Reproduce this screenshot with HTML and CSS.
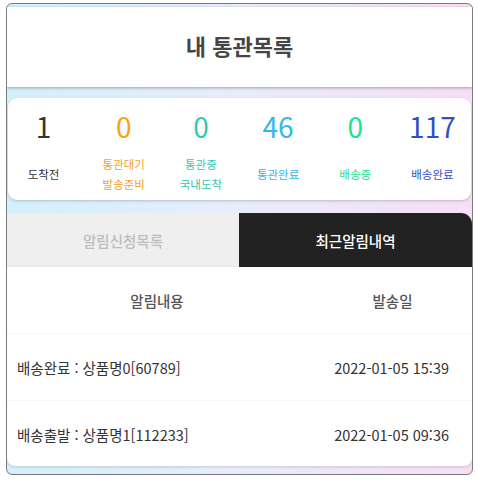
FILE: index.html
```html
<!DOCTYPE html>
<html lang="ko">
<head>
    <meta charset="UTF-8">
    <meta name="viewport" content="width=device-width, initial-scale=1.0">
    <title>내 통관목록</title>
    <link rel="stylesheet" href="styles.css">
</head>
<body>
    <div class="wrap">
        <div class="titulo">내 통관목록</div>

        <div class="resumo">
            <div class="item cinza"><span class="num">1</span><p>도착전</p></div>
            <div class="item laranja"><span class="num">0</span><p>통관대기<br>발송준비</p></div>
            <div class="item turquesa"><span class="num">0</span><p>통관중<br>국내도착</p></div>
            <div class="item celeste"><span class="num">46</span><p>통관완료</p></div>
            <div class="item verde"><span class="num">0</span><p>배송중</p></div>
            <div class="item azul"><span class="num">117</span><p>배송완료</p></div>
        </div>

        <div class="abas">
            <div class="aba">알림신청목록</div>
            <div class="aba ativa">최근알림내역</div>
        </div>

        <div class="tabela">
            <div class="linha cabecalho">
                <div class="col-conteudo">알림내용</div>
                <div class="col-data">발송일</div>
            </div>
            <div class="linha">
                <div class="col-conteudo">배송완료 : 상품명0[60789]</div>
                <div class="col-data">2022-01-05 15:39</div>
            </div>
            <div class="linha">
                <div class="col-conteudo">배송출발 : 상품명1[112233]</div>
                <div class="col-data">2022-01-05 09:36</div>
            </div>
        </div>
    </div>
</body>
</html>
```

FILE: styles.css
```css
body,html{
    margin: 0;
    background: #fff;
    font-family: 'Noto Sans CJK KR', 'Noto Sans', sans-serif;
}
body{
    padding: 3px 0 0 6px;
}
.wrap{
    width: 465px;
    height: 467px;
    border: 1px solid #7a7a7a;
    border-radius: 6px;
    background: linear-gradient(90deg, #d3f0fb 0%, #e8ecfb 50%, #f7def5 100%);
    padding-top: 3px;
    box-sizing: content-box;
    overflow: hidden;
    display: flex;
    flex-direction: column;
}
.titulo{
    height: 80px;
    padding-bottom: 4px;
    box-sizing: border-box;
    background: #fff;
    display: flex;
    align-items: center;
    justify-content: center;
    font-size: 22px;
    font-weight: bold;
    color: #454545;
    box-shadow: 0 1px 3px rgba(0, 0, 0, 0.3);
    position: relative;
}
.resumo{
    margin: 11px 1px 0 1px;
    height: 102px;
    background: #fff;
    border-radius: 9px;
    box-shadow: 0 1px 3px rgba(0, 0, 0, 0.2);
    display: grid;
    grid-template-columns: repeat(6, 1fr);
}
.item{
    display: flex;
    flex-direction: column;
    align-items: center;
    padding-top: 10px;
}
.item:first-child{
    margin-left: -6px;
}
.num{
    font-size: 28px;
    line-height: 36px;
    font-weight: 400;
}
.item p{
    margin: 0;
    margin-top: 10px;
    font-size: 11.5px;
    line-height: 20px;
    text-align: center;
    height: 40px;
    display: flex;
    align-items: center;
}
.cinza{ color: #333; }
.laranja{ color: #f6a21d; }
.turquesa{ color: #37c6b0; }
.celeste{ color: #35b6ef; }
.verde{ color: #22e08f; }
.azul{ color: #2e4fc8; }

.abas{
    margin-top: 13px;
    display: flex;
    height: 54px;
}
.aba{
    width: 232px;
    background: #efefef;
    color: #bdbdbd;
    font-size: 14.5px;
    font-weight: 500;
    display: flex;
    align-items: center;
    justify-content: center;
}
.ativa{
    flex: 1;
    background: #222;
    color: #fff;
    border-top-right-radius: 11px;
}
.tabela{
    background: #fff;
    height: 199px;
    border-radius: 0 0 8px 8px;
    box-shadow: 0 1px 3px rgba(0, 0, 0, 0.15);
}
.linha{
    display: flex;
    align-items: center;
    height: 66px;
    border-bottom: 1px solid #f6f6f6;
    font-size: 14.5px;
    color: #333;
}
.linha:last-child{
    border-bottom: none;
}
.col-conteudo{
    width: 290px;
    padding-left: 10px;
}
.col-data{
    flex: 1;
    text-align: right;
    padding-right: 23px;
}
.cabecalho{
    color: #555;
    font-weight: 500;
}
.cabecalho .col-conteudo{
    text-align: center;
    padding-left: 0;
    width: 300px;
}
.cabecalho .col-data{
    text-align: center;
    padding-right: 0;
    padding-left: 6px;
}
```
